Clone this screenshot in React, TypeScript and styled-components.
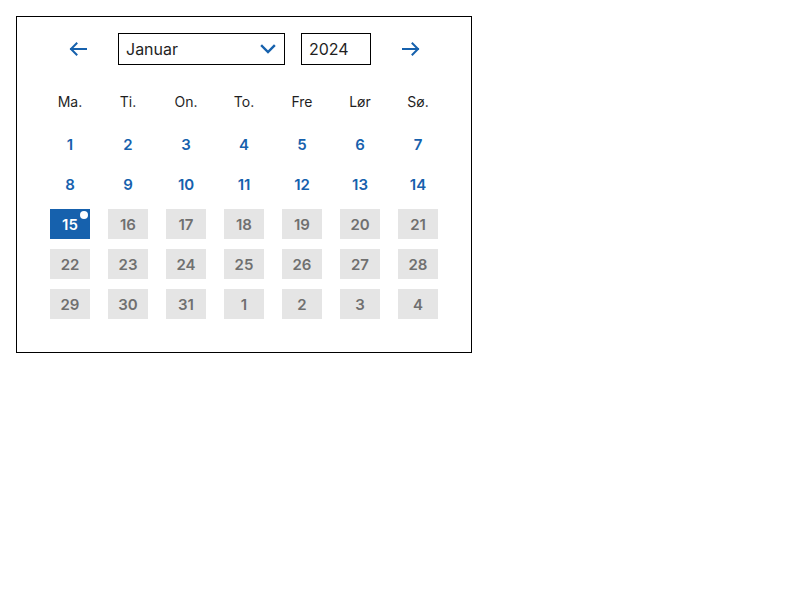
import React, { useState } from "react";
import styled, { createGlobalStyle } from "styled-components";

const BLUE = "#1661ad";

const GlobalStyle = createGlobalStyle`
  body {
    margin: 16px;
    font-family: Inter, "Noto Sans", sans-serif;
    color: #1f1f1f;
    background: #ffffff;
  }
`;

const MONTHS = [
  "Januar",
  "Februar",
  "Mars",
  "April",
  "Mai",
  "Juni",
  "Juli",
  "August",
  "September",
  "Oktober",
  "November",
  "Desember",
];

const WEEKDAYS = ["Ma.", "Ti.", "On.", "To.", "Fre", "Lør", "Sø."];

type Day = { label: number; enabled: boolean; selected?: boolean };

const buildDays = (): Day[] => {
  const days: Day[] = [];
  for (let d = 1; d <= 31; d++) {
    days.push({ label: d, enabled: d <= 15, selected: d === 15 });
  }
  for (let d = 1; d <= 4; d++) days.push({ label: d, enabled: false });
  return days;
};

const ArrowIcon = ({ flip }: { flip?: boolean }) => (
  <svg
    width="18"
    height="14"
    viewBox="0 0 18 14"
    fill="none"
    style={flip ? { transform: "scaleX(-1)" } : undefined}
  >
    <path
      d="M1 7h15M10.5 1.5 16 7l-5.5 5.5"
      stroke={BLUE}
      strokeWidth="2"
      strokeLinecap="square"
    />
  </svg>
);

const ChevronIcon = () => (
  <svg width="16" height="10" viewBox="0 0 16 10" fill="none">
    <path
      d="M2 2l6 6 6-6"
      stroke={BLUE}
      strokeWidth="2.4"
      strokeLinecap="square"
    />
  </svg>
);

export default function App() {
  const [month] = useState(0);
  const days = buildDays();

  return (
    <>
      <GlobalStyle />
      <Calendar>
        <Header>
          <NavButton aria-label="Forrige måned">
            <ArrowIcon flip />
          </NavButton>
          <MonthSelect>
            <span>{MONTHS[month]}</span>
            <ChevronIcon />
          </MonthSelect>
          <YearInput>2024</YearInput>
          <NavButton aria-label="Neste måned">
            <ArrowIcon />
          </NavButton>
        </Header>

        <WeekRow>
          {WEEKDAYS.map((w) => (
            <WeekDay key={w}>{w}</WeekDay>
          ))}
        </WeekRow>

        <DayGrid>
          {days.map((day, i) => (
            <DayCell key={i} $enabled={day.enabled} $selected={day.selected}>
              {day.label}
              {day.selected && <TodayDot />}
            </DayCell>
          ))}
        </DayGrid>
      </Calendar>
    </>
  );
}

const Calendar = styled.div`
  width: 388px;
  padding: 16px 33px 33px;
  border: 1px solid #000000;
`;

const Header = styled.div`
  display: flex;
  align-items: center;
  gap: 16px;
  padding-left: 4px;
  height: 32px;
`;

const NavButton = styled.button`
  display: flex;
  align-items: center;
  justify-content: center;
  width: 48px;
  height: 32px;
  padding: 0;
  border: none;
  background: transparent;
  cursor: pointer;
`;

const MonthSelect = styled.div`
  box-sizing: border-box;
  display: flex;
  align-items: center;
  justify-content: space-between;
  width: 167px;
  height: 32px;
  padding: 0 8px 0 7px;
  border: 1px solid #000000;
  font-size: 16px;
  color: #1f1f1f;
`;

const YearInput = styled.div`
  box-sizing: border-box;
  display: flex;
  align-items: center;
  width: 70px;
  height: 32px;
  padding: 0 7px;
  border: 1px solid #000000;
  font-size: 16px;
  color: #1f1f1f;
`;

const WeekRow = styled.div`
  display: grid;
  grid-template-columns: repeat(7, 40px);
  column-gap: 18px;
  margin-top: 21px;
  margin-bottom: 13px;
`;

const WeekDay = styled.div`
  height: 30px;
  display: flex;
  align-items: center;
  justify-content: center;
  font-size: 14px;
  color: #1f1f1f;
`;

const DayGrid = styled.div`
  display: grid;
  grid-template-columns: repeat(7, 40px);
  column-gap: 18px;
  row-gap: 10px;
`;

const DayCell = styled.div<{ $enabled: boolean; $selected?: boolean }>`
  position: relative;
  height: 30px;
  display: flex;
  align-items: center;
  justify-content: center;
  font-size: 15px;
  font-weight: 600;
  color: ${(p) => (p.$selected ? "#ffffff" : p.$enabled ? BLUE : "#707070")};
  background: ${(p) =>
    p.$selected ? BLUE : p.$enabled ? "transparent" : "#e5e5e5"};
`;

const TodayDot = styled.span`
  position: absolute;
  top: 2px;
  right: 2px;
  width: 8px;
  height: 8px;
  border-radius: 50%;
  background: #ffffff;
`;
